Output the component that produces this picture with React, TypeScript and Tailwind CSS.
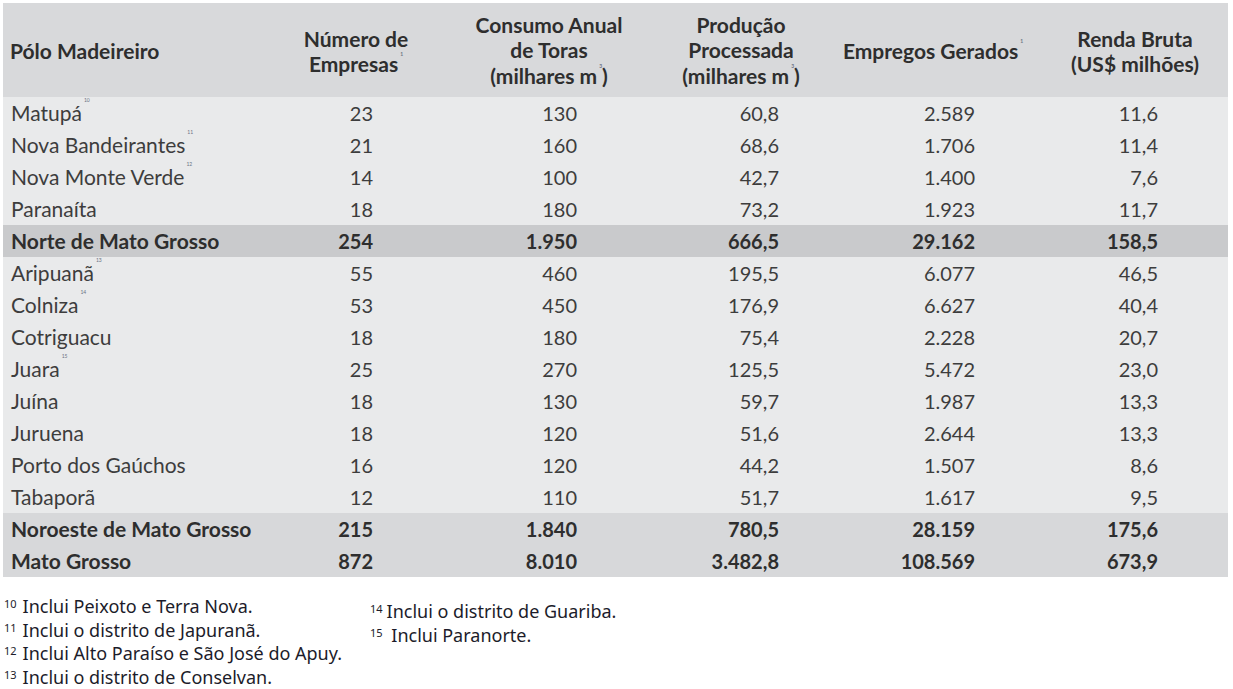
import React from "react";

type Row = {
  name: string;
  note?: string;
  values: string[];
  kind?: "normal" | "region" | "total";
};

const rows: Row[] = [
  { name: "Matupá", note: "10", values: ["23", "130", "60,8", "2.589", "11,6"] },
  { name: "Nova Bandeirantes", note: "11", values: ["21", "160", "68,6", "1.706", "11,4"] },
  { name: "Nova Monte Verde", note: "12", values: ["14", "100", "42,7", "1.400", "7,6"] },
  { name: "Paranaíta", values: ["18", "180", "73,2", "1.923", "11,7"] },
  { name: "Norte de Mato Grosso", values: ["254", "1.950", "666,5", "29.162", "158,5"], kind: "region" },
  { name: "Aripuanã", note: "13", values: ["55", "460", "195,5", "6.077", "46,5"] },
  { name: "Colniza", note: "14", values: ["53", "450", "176,9", "6.627", "40,4"] },
  { name: "Cotriguacu", values: ["18", "180", "75,4", "2.228", "20,7"] },
  { name: "Juara", note: "15", values: ["25", "270", "125,5", "5.472", "23,0"] },
  { name: "Juína", values: ["18", "130", "59,7", "1.987", "13,3"] },
  { name: "Juruena", values: ["18", "120", "51,6", "2.644", "13,3"] },
  { name: "Porto dos Gaúchos", values: ["16", "120", "44,2", "1.507", "8,6"] },
  { name: "Tabaporã", values: ["12", "110", "51,7", "1.617", "9,5"] },
  { name: "Noroeste de Mato Grosso", values: ["215", "1.840", "780,5", "28.159", "175,6"], kind: "total" },
  { name: "Mato Grosso", values: ["872", "8.010", "3.482,8", "108.569", "673,9"], kind: "total" },
];

// right padding so the numbers line up with the reference
const numPad = ["pr-[49px]", "pr-[99px]", "pr-[27px]", "pr-[85px]", "pr-[70px]"];

const grid = "grid grid-cols-[287px_132px_254px_130px_254px_168px]";

function Sup({ n }: { n: string }) {
  return <sup className="ml-[2px] text-[5px] text-gray-500 align-top relative top-[3px]">{n}</sup>;
}

const leftNotes = [
  ["10", "Inclui Peixoto e Terra Nova."],
  ["11", "Inclui o distrito de Japuranã."],
  ["12", "Inclui Alto Paraíso e São José do Apuy."],
  ["13", "Inclui o distrito de Conselvan."],
];
const rightNotes = [
  ["14", "Inclui o distrito de Guariba."],
  ["15", " Inclui Paranorte."],
];

export default function App() {
  return (
    <div className="w-[1233px] h-[689px] bg-white pt-[3px] pl-[3px] font-['Lato',sans-serif]">
      <div className="w-[1225px]">
        <div className={`${grid} h-[94px] bg-[#d8d9db] text-[21px] font-bold text-[#2e2e2e] leading-[25.5px]`}>
          <div className="flex items-center pl-[7px] pt-[2px]">Pólo Madeireiro</div>
          <div className="flex flex-col items-center justify-center text-center pt-[2px]">
            <span>Número de</span>
            <span>Empresas<Sup n="1" /></span>
          </div>
          <div className="flex flex-col items-center justify-center text-center">
            <span>Consumo Anual</span>
            <span>de Toras</span>
            <span>(milhares m<Sup n="3" />)</span>
          </div>
          <div className="flex flex-col items-center justify-center text-center">
            <span>Produção</span>
            <span>Processada</span>
            <span>(milhares m<Sup n="3" />)</span>
          </div>
          <div className="flex items-center justify-center pt-[2px]">
            <span>Empregos Gerados<Sup n="1" /></span>
          </div>
          <div className="flex flex-col items-center justify-center text-center pr-[18px] pt-[2px]">
            <span>Renda Bruta</span>
            <span>(US$ milhões)</span>
          </div>
        </div>
        {rows.map((r) => {
          const bg =
            r.kind === "region" ? "bg-[#c9cacc]" : r.kind === "total" ? "bg-[#d7d8da]" : "bg-[#e9eaeb]";
          const weight = r.kind ? "font-bold text-[#2e2e2e]" : "text-[#3d3d3d]";
          return (
            <div key={r.name} className={`${grid} h-[32px] items-center ${bg} ${weight}`}>
              <div className="pl-[8px] text-[21px]">
                {r.name}
                {r.note && <Sup n={r.note} />}
              </div>
              {r.values.map((v, i) => (
                <div key={i} className={`text-right text-[20px] ${numPad[i]}`}>
                  {v}
                </div>
              ))}
            </div>
          );
        })}
      </div>
      <div className="flex mt-[18px] font-['Noto_Sans',sans-serif] text-[18px] text-[#1c1c2a] leading-[23.5px]">
        <div className="w-[367px] pl-[1px]">
          {leftNotes.map(([n, t]) => (
            <div key={n} className="flex items-start">
              <span className="text-[11px] leading-[18px] mr-[6px]">{n}</span>
              <span>{t}</span>
            </div>
          ))}
        </div>
        <div className="pt-[5px]">
          {rightNotes.map(([n, t]) => (
            <div key={n} className="flex items-start">
              <span className="text-[11px] leading-[18px] mr-[4px]">{n}</span>
              <span className="whitespace-pre">{t}</span>
            </div>
          ))}
        </div>
      </div>
    </div>
  );
}
